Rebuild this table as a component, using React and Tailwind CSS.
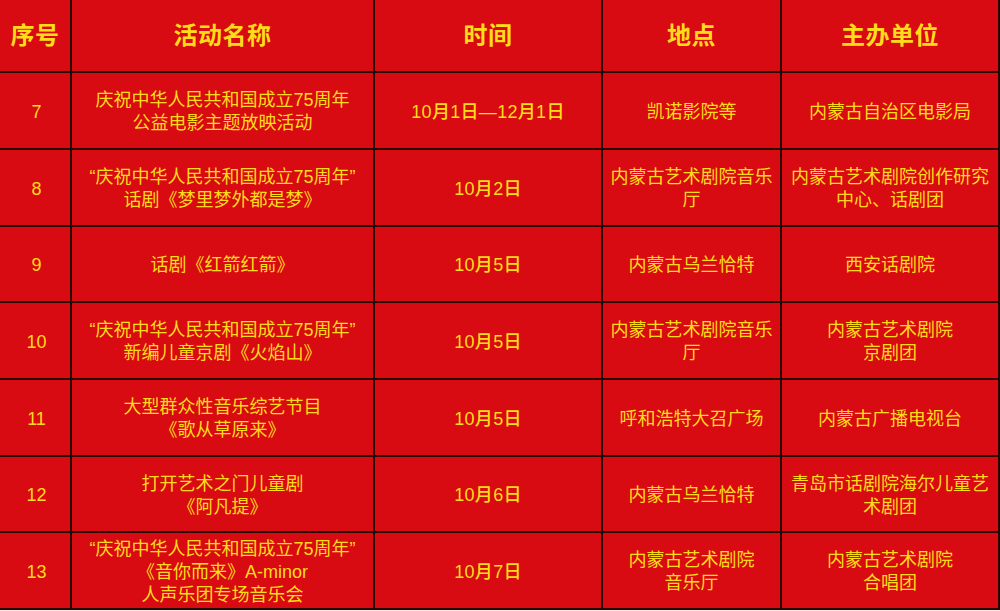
import React from "react";

const rows = [
  {
    no: "7",
    name: ["庆祝中华人民共和国成立75周年", "公益电影主题放映活动"],
    time: "10月1日—12月1日",
    place: ["凯诺影院等"],
    host: ["内蒙古自治区电影局"],
    h: "h-[77px]",
  },
  {
    no: "8",
    name: ["“庆祝中华人民共和国成立75周年”", "话剧《梦里梦外都是梦》"],
    time: "10月2日",
    place: ["内蒙古艺术剧院音乐", "厅"],
    host: ["内蒙古艺术剧院创作研究", "中心、话剧团"],
    h: "h-[77px]",
  },
  {
    no: "9",
    name: ["话剧《红箭红箭》"],
    time: "10月5日",
    place: ["内蒙古乌兰恰特"],
    host: ["西安话剧院"],
    h: "h-[76px]",
  },
  {
    no: "10",
    name: ["“庆祝中华人民共和国成立75周年”", "新编儿童京剧《火焰山》"],
    time: "10月5日",
    place: ["内蒙古艺术剧院音乐", "厅"],
    host: ["内蒙古艺术剧院", "京剧团"],
    h: "h-[77px]",
  },
  {
    no: "11",
    name: ["大型群众性音乐综艺节目", "《歌从草原来》"],
    time: "10月5日",
    place: ["呼和浩特大召广场"],
    host: ["内蒙古广播电视台"],
    h: "h-[77px]",
  },
  {
    no: "12",
    name: ["打开艺术之门儿童剧", "《阿凡提》"],
    time: "10月6日",
    place: ["内蒙古乌兰恰特"],
    host: ["青岛市话剧院海尔儿童艺", "术剧团"],
    h: "h-[76px]",
  },
  {
    no: "13",
    name: ["“庆祝中华人民共和国成立75周年”", "《音你而来》A-minor", "人声乐团专场音乐会"],
    time: "10月7日",
    place: ["内蒙古艺术剧院", "音乐厅"],
    host: ["内蒙古艺术剧院", "合唱团"],
    h: "h-[77px]",
  },
];

const font = "font-['Liberation_Sans','Noto_Sans_CJK_SC',sans-serif]";

const Cell = ({ h, children }) => (
  <div
    className={`${h} flex flex-col items-center justify-center pt-[3px] text-center border-b-2 border-r-2 border-[#2a0303]`}
  >
    {children}
  </div>
);

const Lines = ({ lines }) =>
  lines.map((l, i) => (
    <div key={i} className="leading-[23px] whitespace-nowrap">
      {l}
    </div>
  ));

export default function App() {
  const headers = ["序号", "活动名称", "时间", "地点", "主办单位"];
  return (
    <div className={`w-[1000px] h-[611px] bg-[#f4e9e9] ${font}`}>
      <div className="grid grid-cols-[72px_303px_228px_179px_218px] bg-[#d80a12] text-[#ffdc1a] text-[18px]">
        {headers.map((t) => (
          <Cell key={t} h="h-[73px]">
            <span className="text-[24px] font-bold tracking-[0.5px] -mt-[3px]">{t}</span>
          </Cell>
        ))}
        {rows.map((r) => (
          <React.Fragment key={r.no}>
            <Cell h={r.h}>
              <span className="text-[18px] pl-[3px]">{r.no}</span>
            </Cell>
            <Cell h={r.h}>
              <Lines lines={r.name} />
            </Cell>
            <Cell h={r.h}>
              <span className="text-[18px] font-medium tracking-[0.3px]">{r.time}</span>
            </Cell>
            <Cell h={r.h}>
              <Lines lines={r.place} />
            </Cell>
            <Cell h={r.h}>
              <Lines lines={r.host} />
            </Cell>
          </React.Fragment>
        ))}
      </div>
    </div>
  );
}
